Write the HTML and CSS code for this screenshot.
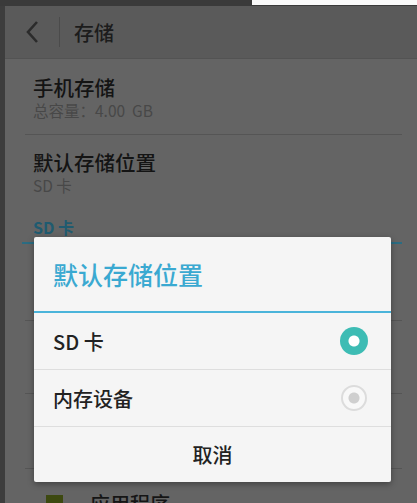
FILE: index.html
```html
<!DOCTYPE html>
<html lang="zh-CN">
<head>
    <meta charset="UTF-8">
    <meta name="viewport" content="width=device-width, initial-scale=1.0">
    <title>存储</title>
    <link rel="stylesheet" href="styles.css">
</head>
<body>
    <div class="top-strip">
        <div class="top-dark"></div>
        <div class="top-light"></div>
    </div>
    <div class="screen">
        <div class="header">
            <svg class="back" width="16" height="24" viewBox="0 0 16 24">
                <path d="M13 2 L4 12 L13 22" fill="none" stroke="#2b2b2b" stroke-width="2.6"/>
            </svg>
            <span class="header-sep"></span>
            <span class="header-title">存储</span>
        </div>
        <div class="content">
            <div class="item first">
                <div class="item-title">手机存储</div>
                <div class="item-sub">总容量：4.00  GB</div>
            </div>
            <div class="item second">
                <div class="item-title">默认存储位置</div>
                <div class="item-sub">SD 卡</div>
            </div>
            <div class="category">SD 卡</div>
            <div class="category-line"></div>
            <div class="row r1"></div>
            <div class="row r2"></div>
            <div class="row r3"></div>
            <div class="app-row">
                <span class="app-swatch"></span>
                <span class="app-label">应用程序</span>
            </div>
        </div>
    </div>

    <div class="dialog">
        <div class="dialog-title">默认存储位置</div>
        <div class="dialog-line"></div>
        <div class="option">
            <span>SD 卡</span>
            <span class="radio checked"></span>
        </div>
        <div class="option">
            <span>内存设备</span>
            <span class="radio"></span>
        </div>
        <div class="dialog-cancel">取消</div>
    </div>
</body>
</html>
```

FILE: styles.css
```css
body {
    margin: 0;
    padding: 0;
    width: 417px;
    height: 503px;
    overflow: hidden;
    background-color: #646464;
    font-family: "Noto Sans CJK SC", "Noto Sans", sans-serif;
    position: relative;
}

.top-strip {
    display: flex;
    height: 5px;
    border-bottom: 1px solid #3a3a3a;
}

.top-dark {
    width: 252px;
    background-color: #3a3a3a;
}

.top-light {
    flex: 1;
    background-color: #fafafa;
}

.screen {
    border-left: 5px solid #3d3d3d;
    height: 497px;
}

.header {
    display: flex;
    align-items: center;
    height: 52px;
    background-color: #5a5a5a;
    border-bottom: 1px solid #535353;
}

.back {
    margin-left: 19px;
}

.header-sep {
    width: 1px;
    height: 30px;
    background-color: #4b4b4b;
    margin-left: 19px;
}

.header-title {
    margin-left: 14px;
    font-size: 20px;
    font-weight: 500;
    color: #1c1c1c;
}

.content {
    padding: 0 15px 0 20px;
}

.item {
    padding-left: 8px;
}

.item.first {
    padding-top: 15px;
    padding-bottom: 14px;
    border-bottom: 1px solid #555555;
}

.item.second {
    padding-top: 14px;
}

.item-title {
    font-size: 20.5px;
    line-height: 26px;
    font-weight: 500;
    color: #141414;
}

.item-sub {
    font-size: 15.5px;
    line-height: 20px;
    color: #484848;
    white-space: pre;
}

.category {
    padding: 22px 0 0 8px;
    font-size: 16px;
    line-height: 20px;
    font-weight: bold;
    color: #1f5b70;
}

.category-line {
    margin: 5px 0 0 -3px;
    height: 2px;
    background-color: #2b6c82;
}

.row {
    border-bottom: 1px solid #555555;
}

.r1 { height: 76px; }
.r2 { height: 72px; }
.r3 { height: 74px; }

.app-row {
    display: flex;
    align-items: center;
    padding: 20px 0 0 21px;
}

.app-swatch {
    width: 17px;
    height: 17px;
    background-color: #3d4910;
}

.app-label {
    margin-left: 27px;
    font-size: 20px;
    font-weight: 500;
    color: #151515;
}

/* dialog over the dimmed page */
.dialog {
    position: absolute;
    left: 34px;
    top: 237px;
    width: 357px;
    background-color: #f5f5f5;
    border-radius: 2px;
    box-shadow: 0 2px 6px rgba(0, 0, 0, 0.35);
}

.dialog-title {
    height: 74px;
    line-height: 74px;
    padding-left: 19px;
    font-size: 25px;
    font-weight: 500;
    color: #3aa9d1;
}

.dialog-line {
    height: 2px;
    background-color: #4ab4da;
}

.option {
    display: flex;
    align-items: center;
    justify-content: space-between;
    height: 56px;
    padding: 0 23px 0 19px;
    border-bottom: 1px solid #dedede;
    font-size: 20px;
    font-weight: 500;
    color: #222222;
}

.radio {
    box-sizing: border-box;
    width: 26px;
    height: 26px;
    border-radius: 50%;
    border: 2px solid #dcdcdc;
    background: radial-gradient(circle, #cfcfcf 0, #cfcfcf 5px, #f8f8f8 6px);
    margin-right: 1px;
}

.radio.checked {
    width: 28px;
    height: 28px;
    margin-right: 0;
    border: none;
    background: radial-gradient(circle, #ffffff 0, #ffffff 5px, #3dbcb4 6px);
}

.dialog-cancel {
    height: 55px;
    line-height: 55px;
    text-align: center;
    font-size: 20px;
    font-weight: 500;
    color: #222222;
}
```
